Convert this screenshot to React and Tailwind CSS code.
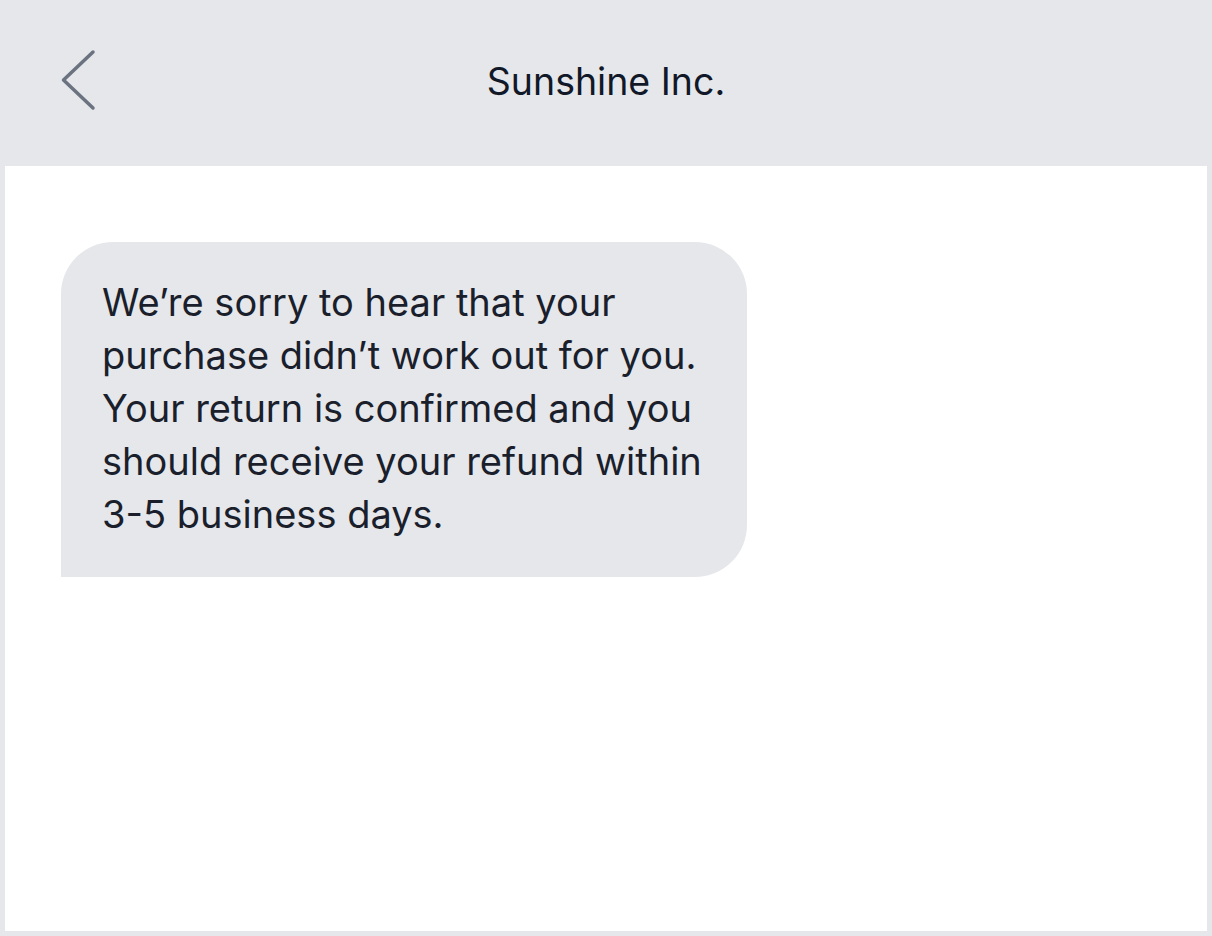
export default function App() {
  const lines = [
    "We\u2019re sorry to hear that your",
    "purchase didn\u2019t work out for you.",
    "Your return is confirmed and you",
    "should receive your refund within",
    "3-5 business days.",
  ];
  return (
    <div className="w-[1212px] h-[936px] bg-[#e5e7eb] flex flex-col" style={{ fontFamily: 'Inter, "Liberation Sans", Arial, sans-serif' }}>
      <div className="h-[166px] shrink-0 relative flex items-center justify-center">
        <svg className="absolute left-[58px] top-[46px]" width="42" height="68" viewBox="0 0 42 68" fill="none">
          <path d="M35 6 L5.5 34 L35 62" stroke="#6b7280" strokeWidth="3.5" strokeLinecap="round" strokeLinejoin="round" />
        </svg>
        <div className="text-[37.5px] text-[#111827] leading-none -mt-[3px]">Sunshine Inc.</div>
      </div>
      <div className="flex-1 mx-[5px] mb-[5px] bg-white pt-[76px] px-[56px]">
        <div className="w-[686px] bg-[#e5e7eb] rounded-tl-[52px] rounded-tr-[52px] rounded-br-[52px] pl-[41px] pt-[34px] pb-[36px] text-[38px] leading-[53px] text-[#1a1f2b]">
          {lines.map((l, i) => (
            <div key={i} className="whitespace-nowrap">{l}</div>
          ))}
        </div>
      </div>
    </div>
  );
}
